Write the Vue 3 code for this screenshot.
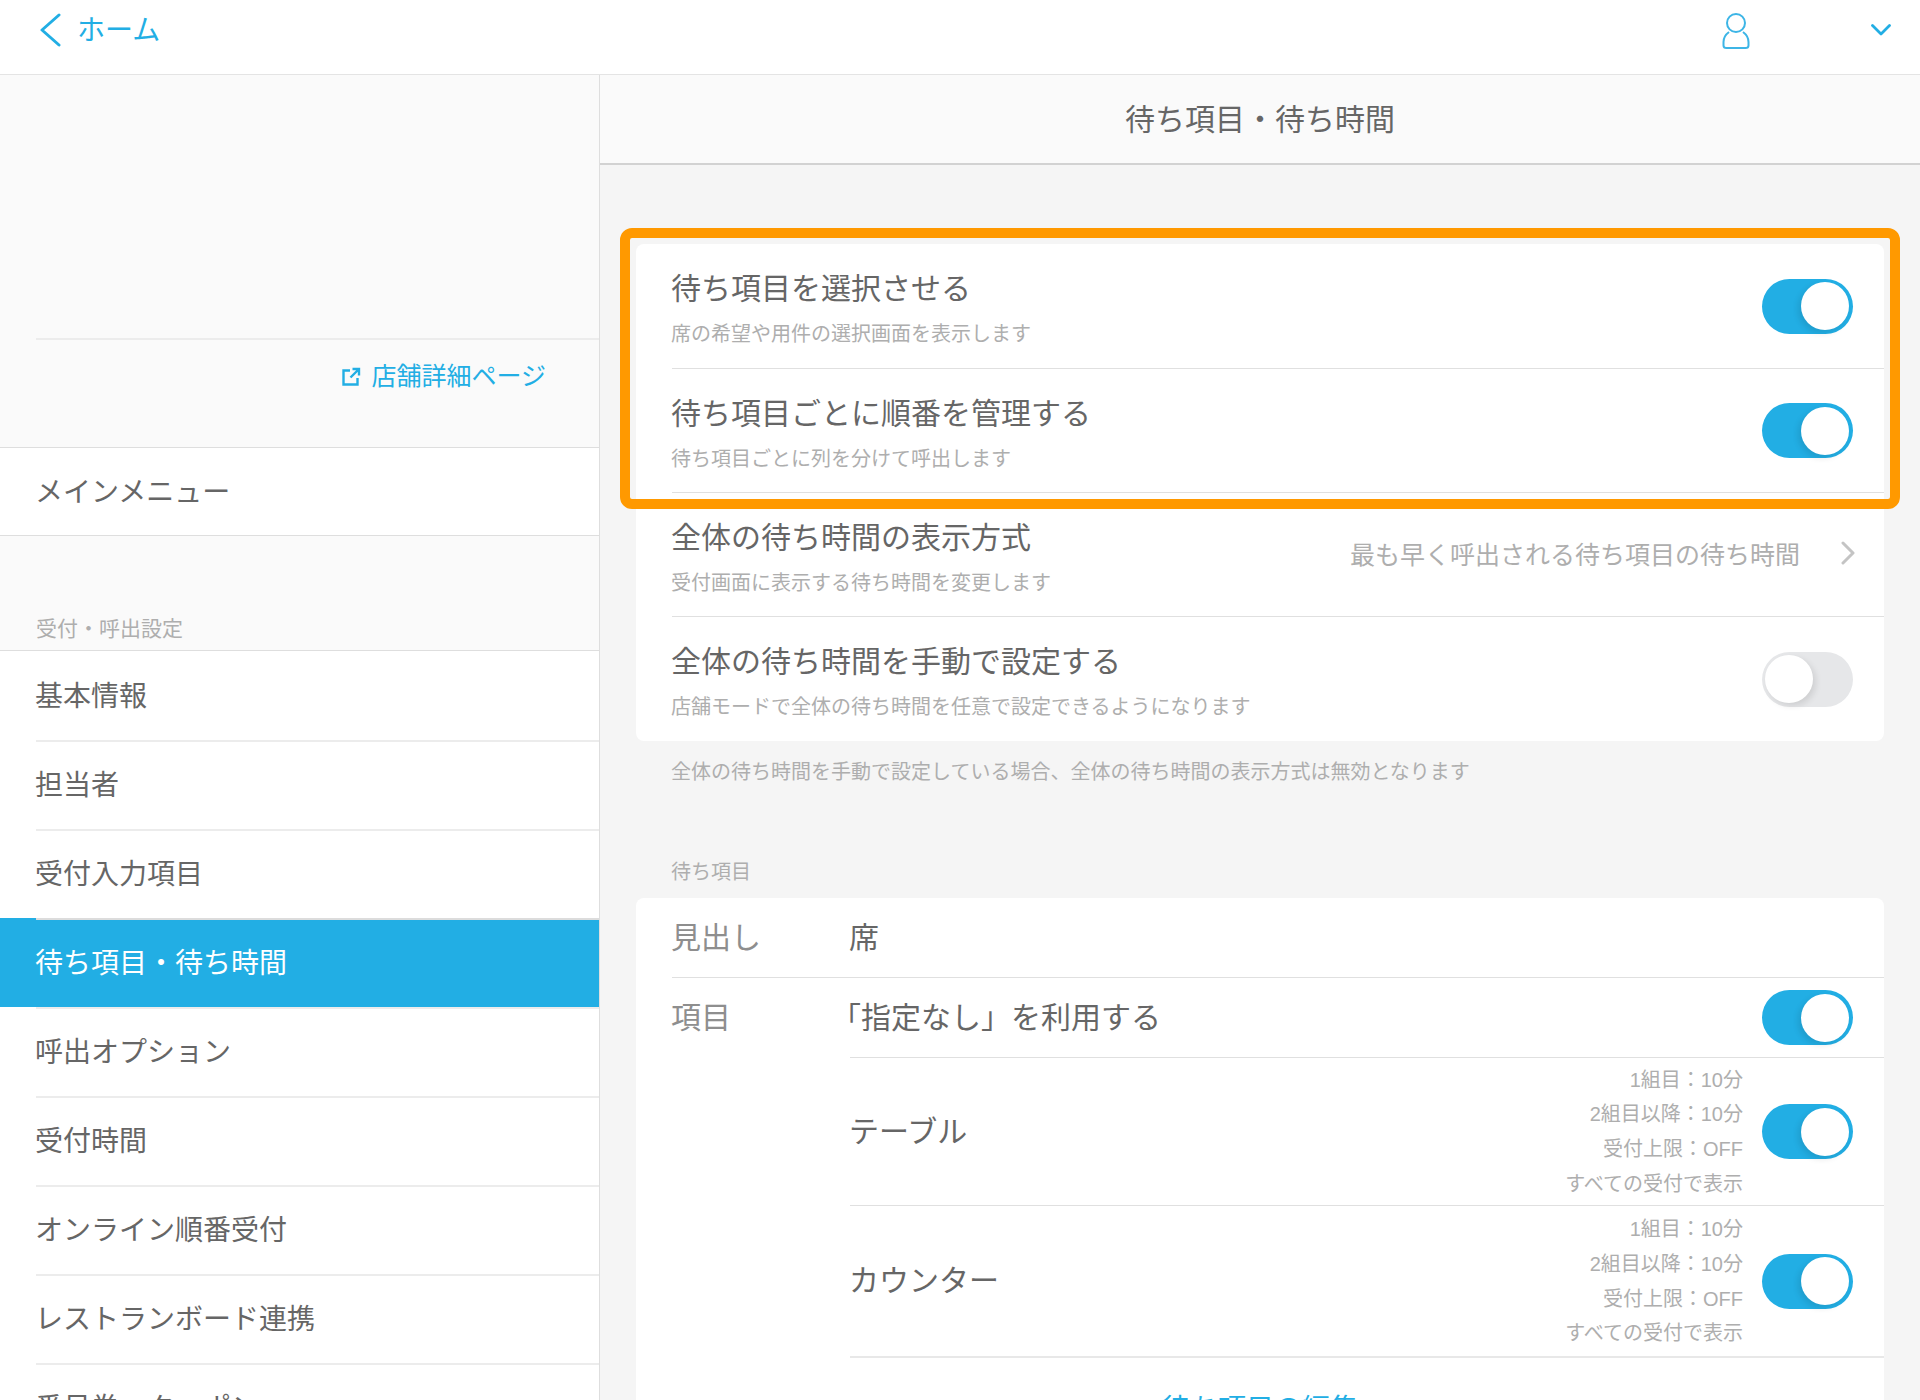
<script setup>
const menu = ['基本情報', '担当者', '受付入力項目', '待ち項目・待ち時間', '呼出オプション', '受付時間', 'オンライン順番受付', 'レストランボード連携', '番号券・クーポン']
const activeItem = '待ち項目・待ち時間'
const settings = [
  { title: '待ち項目を選択させる', sub: '席の希望や用件の選択画面を表示します', toggle: true },
  { title: '待ち項目ごとに順番を管理する', sub: '待ち項目ごとに列を分けて呼出します', toggle: true },
  { title: '全体の待ち時間の表示方式', sub: '受付画面に表示する待ち時間を変更します', value: '最も早く呼出される待ち項目の待ち時間' },
  { title: '全体の待ち時間を手動で設定する', sub: '店舗モードで全体の待ち時間を任意で設定できるようになります', toggle: false },
]
const items = [
  { name: 'テーブル', tall: false },
  { name: 'カウンター', tall: true },
]
const details = ['1組目：10分', '2組目以降：10分', '受付上限：OFF', 'すべての受付で表示']
</script>

<template>
  <div class="app">
    <header class="top">
      <div class="back">
        <svg class="back-icon" width="22" height="34" viewBox="0 0 22 34"><path d="M20 2 L3 17 L20 32" /></svg>
        <span class="back-text">ホーム</span>
      </div>
      <div class="top-right">
        <svg class="user" width="28" height="38" viewBox="0 0 28 38">
          <circle cx="14" cy="11" r="9" />
          <path d="M7 20 C3 23 1.500 26 1.500 30 L1.500 33.500 Q1.500 36 4.500 36 L23.500 36 Q26.500 36 26.500 33.500 L26.500 30 C26.500 26 25 23 21 20" />
        </svg>
        <svg class="caret" width="20" height="12" viewBox="0 0 20 12"><path d="M1.500 1.500 L10 10 L18.500 1.500" /></svg>
      </div>
    </header>

    <div class="body">
      <aside class="side">
        <div class="shop">
          <div class="shop-link-row">
            <a class="shop-link">
              <svg width="20" height="20" viewBox="0 0 20 20">
                <path d="M9 3.500 H2.500 V17.500 H16.500 V11" />
                <path d="M9.500 10.500 L17.500 2.500 M11.500 2 H18 V8.500" />
              </svg>
              <span>店舗詳細ページ</span>
            </a>
          </div>
        </div>
        <div class="main-menu">メインメニュー</div>
        <div class="side-heading">受付・呼出設定</div>
        <nav class="nav">
          <div v-for="m in menu" :key="m" class="nav-row" :class="{ active: m === activeItem }">
            <div class="nav-inner">{{ m }}</div>
          </div>
        </nav>
      </aside>

      <main class="main">
        <div class="title">待ち項目・待ち時間</div>
        <div class="content">
          <section class="card">
            <div v-for="s in settings" :key="s.title" class="row">
              <div class="row-text">
                <div class="row-title">{{ s.title }}</div>
                <div class="row-sub">{{ s.sub }}</div>
              </div>
              <div v-if="s.value" class="row-value">
                <span>{{ s.value }}</span>
                <svg width="16" height="24" viewBox="0 0 16 24"><path d="M3 2 L13 12 L3 22" /></svg>
              </div>
              <div v-else class="toggle" :class="{ on: s.toggle }"><i class="knob"></i></div>
            </div>
            <div class="highlight"></div>
          </section>

          <p class="note">全体の待ち時間を手動で設定している場合、全体の待ち時間の表示方式は無効となります</p>
          <h3 class="heading">待ち項目</h3>

          <section class="card card2">
            <div class="head-row">
              <div class="label">見出し</div>
              <div class="val">席</div>
            </div>
            <div class="group">
              <div class="label group-label">項目</div>
              <div class="group-rows">
                <div class="plain-row">
                  <div class="val"><span class="open">「</span>指定なし」を利用する</div>
                  <div class="toggle on"><i class="knob"></i></div>
                </div>
                <div v-for="it in items" :key="it.name" class="item-row" :class="{ tall: it.tall }">
                  <div class="val">{{ it.name }}</div>
                  <div class="details">
                    <div v-for="d in details" :key="d">{{ d }}</div>
                  </div>
                  <div class="toggle on"><i class="knob"></i></div>
                </div>
              </div>
            </div>
            <div class="edit">待ち項目の編集</div>
          </section>
        </div>
      </main>
    </div>
  </div>
</template>

<style>
html, body { margin: 0; padding: 0; background: #fff; overflow: hidden; }
</style>

<style scoped>
.app {
  width: 1920px;
  height: 1400px;
  overflow: hidden;
  display: flex;
  flex-direction: column;
  font-family: Roboto, "Noto Sans CJK JP", sans-serif;
  font-weight: 400;
  color: #666;
  box-sizing: border-box;
}
.app * { box-sizing: border-box; }

.top {
  height: 75px;
  flex: none;
  background: #fff;
  border-bottom: 1px solid #e4e4e4;
  display: flex;
  justify-content: space-between;
  align-items: flex-start;
  padding: 13px 29px 0 39px;
}
.back {
  display: flex;
  align-items: center;
  gap: 16px;
  color: #22aee4;
  font-size: 28px;
  line-height: 34px;
}
.back-text { position: relative; top: 1px; }
.back-icon path { fill: none; stroke: #22aee4; stroke-width: 3; stroke-linecap: round; stroke-linejoin: round; }
.top-right { display: flex; align-items: flex-start; gap: 121px; }
.user { margin-top: -1px; }
.user circle, .user path { fill: none; stroke: #3db5e6; stroke-width: 2; }
.caret { margin-top: 11px; }
.caret path { fill: none; stroke: #22aee4; stroke-width: 2.800; stroke-linecap: round; stroke-linejoin: round; }

.body { flex: 1; min-height: 0; display: flex; overflow: hidden; }

.side {
  width: 600px;
  flex: none;
  background: #fafafa;
  border-right: 1px solid #dedede;
}
.shop { height: 372px; padding-top: 263px; }
.shop-link-row {
  margin-left: 36px;
  height: 109px;
  border-top: 2px solid #ececec;
  display: flex;
  justify-content: flex-end;
  align-items: flex-start;
  padding: 20px 53px 0 0;
}
.shop-link {
  display: flex;
  align-items: center;
  gap: 10px;
  color: #22aee4;
  font-size: 25px;
  line-height: 34px;
}
.shop-link path { fill: none; stroke: #22aee4; stroke-width: 2.400; }
.main-menu {
  height: 89px;
  background: #fff;
  border-top: 1px solid #dedede;
  border-bottom: 1px solid #dedede;
  padding-left: 35px;
  font-size: 28px;
  line-height: 89px;
}
.side-heading {
  height: 114px;
  padding: 79px 0 0 36px;
  font-size: 21px;
  line-height: 28px;
  color: #aeaeae;
}
.nav { background: #fff; border-top: 1px solid #dedede; }
.nav-row { height: 89px; padding-left: 36px; font-size: 28px; }
.nav-inner {
  height: 89px;
  line-height: 87px;
  text-indent: -1px;
  border-top: 2px solid #ececec;
}
.nav-row:first-child .nav-inner { border-top-color: transparent; }
.nav-row.active { background: #22aee4; color: #fff; }
.nav-row.active .nav-inner { border-top-color: #dcdcdc; }

.main { flex: 1; min-width: 0; background: #f5f5f5; }
.title {
  height: 90px;
  background: #fafafa;
  border-bottom: 2px solid #d2d2d2;
  text-align: center;
  font-size: 30px;
  line-height: 89px;
}
.content { padding: 79px 36px 0; }

.card {
  position: relative;
  background: #fff;
  border-radius: 8px;
  padding-left: 36px;
}
.row {
  height: 124px;
  display: flex;
  justify-content: space-between;
  align-items: center;
  padding-right: 31px;
  border-bottom: 1px solid #e0e0e0;
}
.row:first-child { height: 125px; }
.row:nth-last-child(2) { border-bottom: none; }
.row-text { align-self: flex-start; padding-top: 27px; margin-left: -1px; }
.row-title { font-size: 30px; line-height: 36px; }
.row-sub { font-size: 20px; line-height: 28px; margin-top: 13px; color: #aeaeae; }
.row-value {
  display: flex;
  align-items: center;
  gap: 40px;
  margin-right: -3px;
  margin-top: -4px;
  font-size: 25px;
  color: #aeaeae;
}
.row-value path { fill: none; stroke: #c4c4c4; stroke-width: 3; stroke-linecap: round; stroke-linejoin: round; }

.toggle {
  width: 91px;
  height: 55px;
  flex: none;
  border-radius: 28px;
  background: #e6e7e9;
  padding: 3.500px 3px;
  display: flex;
  justify-content: flex-start;
}
.toggle.on { background: #22aee4; justify-content: flex-end; padding: 3.500px 4px; }
.knob {
  width: 48px;
  height: 48px;
  border-radius: 50%;
  background: #fff;
  box-shadow: 3px 3px 6px rgba(0, 0, 0, 0.10);
}
.toggle.on .knob { box-shadow: -3px 3px 6px rgba(0, 0, 0, 0.10); }

.highlight {
  position: absolute;
  top: -16px;
  left: -16px;
  right: -16px;
  height: 281px;
  border: 10px solid #ff9900;
  border-radius: 12px;
  pointer-events: none;
}

.note { margin: 17px 0 0 35px; font-size: 20px; line-height: 28px; color: #aeaeae; }
.heading { margin: 72px 0 12px 35px; font-size: 20px; line-height: 28px; font-weight: 400; color: #aeaeae; }

.head-row {
  height: 80px;
  display: flex;
  align-items: center;
  border-bottom: 1px solid #e0e0e0;
}
.label { width: 178px; flex: none; font-size: 30px; line-height: 36px; color: #8e8e8e; text-indent: -1px; }
.val { font-size: 30px; line-height: 36px; text-indent: -1px; }
.open { margin-left: -18px; }
.group { display: flex; }
.group-label { padding-top: 22px; }
.group-rows { flex: 1; min-width: 0; }
.plain-row {
  height: 80px;
  display: flex;
  justify-content: space-between;
  align-items: center;
  padding-right: 31px;
  border-bottom: 1px solid #e0e0e0;
}
.item-row {
  height: 148px;
  display: flex;
  align-items: center;
  padding-right: 31px;
  border-bottom: 1px solid #e0e0e0;
}
.item-row.tall { height: 152px; border-bottom: 2px solid #e8e8e8; }
.item-row .val { flex: 1; }
.details {
  margin-right: 19px;
  margin-top: 1px;
  text-align: right;
  font-family: "Liberation Sans", "Noto Sans CJK JP", sans-serif;
  font-size: 20px;
  line-height: 34.600px;
  color: #aeaeae;
}
.edit {
  height: 104px;
  margin-left: -36px;
  text-align: center;
  font-size: 28px;
  line-height: 104px;
  color: #22aee4;
}
</style>
